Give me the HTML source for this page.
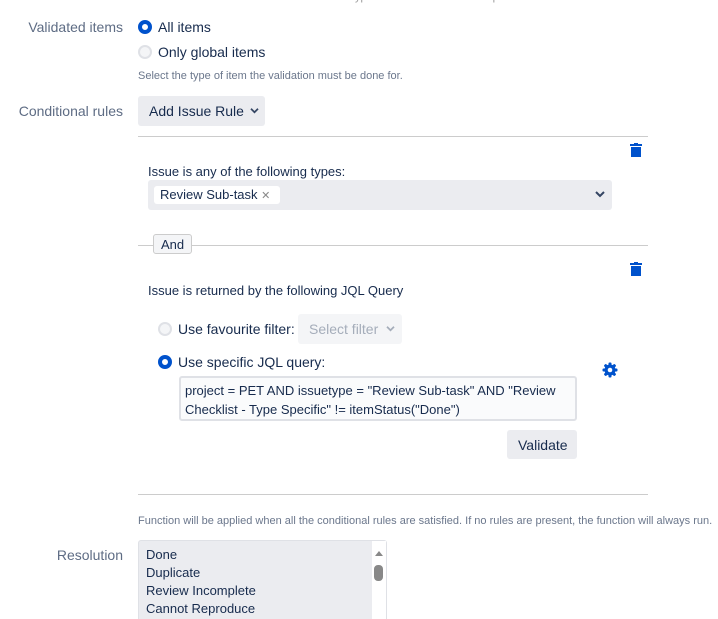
<!DOCTYPE html>
<html><head><style>
*{margin:0;padding:0;box-sizing:border-box}
html,body{width:718px;height:619px;overflow:hidden}
body{background:#fff;font-family:"Liberation Sans",sans-serif;color:#172b4d;position:relative;font-size:14px}
.a{position:absolute;white-space:nowrap}
.lbl{color:#5e6c84;font-size:14px;text-align:right;width:123px;left:0}
.sm{font-size:11px;color:#6b778c}
.radio{position:absolute;width:14px;height:14px;border-radius:50%}
.on{background:#fff;border:4px solid #0052cc}
.off{background:#f4f5f7;border:2px solid #dfe1e6}
.hr{position:absolute;height:1px;background:#ccc}
.trash{position:absolute;width:12px;height:14px}
</style></head><body>
<div class="a sm" style="left:300px;top:-9px;color:#999;width:418px;overflow:hidden">Select the type of validation that will be performed: use either round numbers</div>

<div class="a lbl" style="top:19px">Validated items</div>
<div class="radio on" style="left:138px;top:20px"></div>
<div class="a" style="left:158px;top:19px">All items</div>
<div class="radio off" style="left:138px;top:45px"></div>
<div class="a" style="left:158px;top:44px">Only global items</div>
<div class="a sm" style="left:138px;top:70px">Select the type of item the validation must be done for.</div>

<div class="a lbl" style="top:103px">Conditional rules</div>
<div class="a" style="left:138px;top:96px;width:127px;height:30px;background:#ebecf0;border-radius:3px;padding:7px 0 0 11px">Add Issue Rule</div>
<svg class="a" style="left:250px;top:107px" width="9" height="7" viewBox="0 0 10 8"><path d="M1 2 L5 6 L9 2" stroke="#344563" stroke-width="2" fill="none"/></svg>

<div class="hr" style="left:138px;top:136px;width:510px"></div>
<svg class="trash" style="left:630px;top:143px" viewBox="0 0 12 14"><rect x="0" y="1" width="12" height="2" fill="#0052cc"/><rect x="4" y="0" width="4" height="2" fill="#0052cc"/><rect x="1" y="4" width="10" height="10" fill="#0052cc"/></svg>
<div class="a" style="left:148px;top:164px;font-size:13px">Issue is any of the following types:</div>
<div class="a" style="left:148px;top:180px;width:464px;height:30px;background:#ebecf0;border-radius:3px"></div>
<div class="a" style="left:154px;top:186px;width:126px;height:18px;background:#fff;border-radius:3px;padding:1px 0 0 6px;font-size:13px">Review Sub-task <span style="color:#888;font-size:11px">✕</span></div>
<svg class="a" style="left:595px;top:190px" width="10" height="8" viewBox="0 0 10 8"><path d="M1 2 L5 6 L9 2" stroke="#344563" stroke-width="2" fill="none"/></svg>

<div class="hr" style="left:138px;top:245px;width:510px"></div>
<div class="a" style="left:153px;top:234px;width:39px;height:20px;background:#f4f5f7;border:1px solid #ccc;border-radius:3px;font-size:13px;padding:2px 0 0 7px">And</div>
<svg class="trash" style="left:630px;top:262px" viewBox="0 0 12 14"><rect x="0" y="1" width="12" height="2" fill="#0052cc"/><rect x="4" y="0" width="4" height="2" fill="#0052cc"/><rect x="1" y="4" width="10" height="10" fill="#0052cc"/></svg>
<div class="a" style="left:148px;top:283px;font-size:13px">Issue is returned by the following JQL Query</div>

<div class="radio off" style="left:158px;top:322px"></div>
<div class="a" style="left:178px;top:321px">Use favourite filter:</div>
<div class="a" style="left:298px;top:314px;width:104px;height:30px;background:#f4f5f7;border-radius:3px;padding:7px 0 0 11px;color:#a5adba">Select filter</div>
<svg class="a" style="left:386px;top:325px" width="9" height="7" viewBox="0 0 10 8"><path d="M1 2 L5 6 L9 2" stroke="#a5adba" stroke-width="2" fill="none"/></svg>
<div class="radio on" style="left:158px;top:355px"></div>
<div class="a" style="left:178px;top:354px">Use specific JQL query:</div>
<svg class="a" style="left:602px;top:362px" width="16" height="16" viewBox="0 0 16 16"><g fill="#0052cc"><circle cx="8" cy="8" r="5.5"/><rect x="6.5" y="0.5" width="3" height="15" rx="1"/><rect x="0.5" y="6.5" width="15" height="3" rx="1"/><rect x="6.5" y="0.5" width="3" height="15" rx="1" transform="rotate(45 8 8)"/><rect x="6.5" y="0.5" width="3" height="15" rx="1" transform="rotate(-45 8 8)"/></g><circle cx="8" cy="8" r="2.3" fill="#fff"/></svg>
<div class="a" style="left:179px;top:376px;width:398px;height:45px;background:#fafbfc;border:2px solid #dfe1e6;border-radius:3px;padding:3px 0 0 4px;font-size:13px;line-height:19px;white-space:normal">project = PET AND issuetype = "Review Sub-task" AND "Review Checklist - Type Specific" != itemStatus("Done")</div>
<div class="a" style="left:507px;top:430px;width:70px;height:29px;background:#ebecf0;border-radius:3px;padding:7px 0 0 11px">Validate</div>

<div class="hr" style="left:138px;top:494px;width:510px"></div>
<div class="a sm" style="left:138px;top:515px;width:580px;overflow:hidden">Function will be applied when all the conditional rules are satisfied. If no rules are present, the function will always run.</div>

<div class="a lbl" style="top:547px">Resolution</div>
<div class="a" style="left:138px;top:540px;width:249px;height:79px;background:#ebecf0;border:1px solid #dfe1e6;border-bottom:none;border-radius:3px 3px 0 0"></div>
<div class="a" style="left:146px;top:546px;font-size:13px;line-height:18px">Done<br>Duplicate<br>Review Incomplete<br>Cannot Reproduce</div>
<div class="a" style="left:372px;top:541px;width:14px;height:78px;background:#fff"></div>
<div class="a" style="left:375px;top:551px;width:0;height:0;border-left:4px solid transparent;border-right:4px solid transparent;border-bottom:5px solid #888"></div>
<div class="a" style="left:374px;top:565px;width:9px;height:16px;background:#888;border-radius:4px"></div>
</body></html>
